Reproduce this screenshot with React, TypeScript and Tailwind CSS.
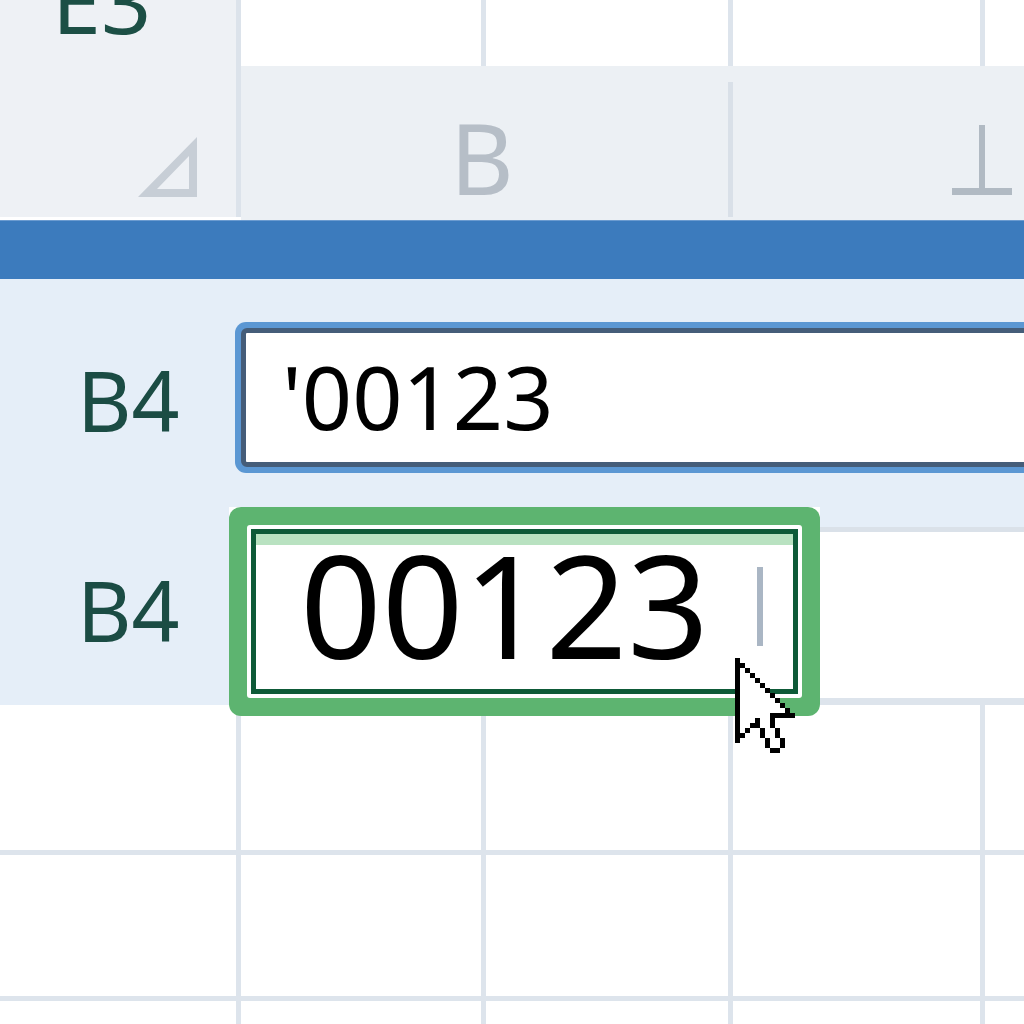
import React from "react";

const CURSOR = [
  "X...........",
  "XX..........",
  "XoX.........",
  "XooX........",
  "XoooX.......",
  "XooooX......",
  "XoooooX.....",
  "XooooooX....",
  "XoooooooX...",
  "XooooooooX..",
  "XoooooooooX.",
  "XooooooXXXXX",
  "XoooXooX....",
  "XooXXooX....",
  "XoX..XooX...",
  "XX...XooX...",
  "X.....XooX..",
  "......XooX..",
  ".......XX...",
];

function MouseCursor() {
  const rects: React.ReactNode[] = [];
  CURSOR.forEach((row, y) => {
    row.split("").forEach((c, x) => {
      if (c === "X" || c === "o") {
        rects.push(
          <rect key={`${x}-${y}`} x={x} y={y} width={1.02} height={1.02} fill={c === "X" ? "#000" : "#fff"} />
        );
      }
    });
  });
  return (
    <svg width={60} height={95} viewBox="0 0 12 19" shapeRendering="crispEdges" className="absolute left-[506px] top-[151px] z-20">
      {rects}
    </svg>
  );
}

export default function App() {
  const font = "font-['Noto_Sans',sans-serif]";
  return (
    <div className={`w-[1024px] h-[1024px] overflow-hidden bg-white ${font}`}>
      {/* top section */}
      <div className="flex h-[220px]">
        <div className="w-[241px] h-[217px] bg-[#eef1f5] border-r-[5px] border-[#dce3eb] flex flex-col shrink-0">
          <div className="mt-[-44px] pl-[52px] text-[88px] leading-none text-[#1c4f45]">E3</div>
          <svg width={60} height={61} viewBox="0 0 60 61" className="mt-[93px] ml-[138px] block">
            <path d="M0 60 L59 0 L59 60 Z M19 52 L51 52 L51 19 Z" fill="#c7ced6" fillRule="evenodd" />
          </svg>
        </div>
        <div className="flex-1 flex flex-col">
          <div className="h-[66px] grid grid-cols-[240px_242px_247px_1fr] gap-x-[5px] bg-[#dde4ec]">
            <div className="bg-white" />
            <div className="bg-white" />
            <div className="bg-white" />
            <div className="bg-white" />
          </div>
          <div className="h-[154px] bg-[#ecf0f4] flex items-start">
            <div className="w-[487px] pl-[209px] pt-[42px] text-[98px] leading-none text-[#b6bec7]">B</div>
            <div className="w-[5px] h-[135px] mt-[16px] bg-[#d9e0e8]" />
            <div className="pl-[219px] pt-[59px] flex flex-col items-center w-[279px]">
              <div className="w-[6px] h-[63px] bg-[#b1bac3]" />
              <div className="w-[60px] h-[7px] bg-[#b1bac3]" />
            </div>
          </div>
        </div>
      </div>

      {/* blue bar */}
      <div className="h-[59px] bg-[#3c7bbd] border-t border-[#6b9bd0]" />

      {/* row A */}
      <div className="h-[228px] bg-[#e5eef8] flex">
        <div className="w-[235px] shrink-0 pt-[79px] pl-[77px] text-[84px] leading-none text-[#1b4c44]">B4</div>
        <div className="mt-[43px] h-[151px] w-[820px] shrink-0 bg-[#5b97d3] p-[6px] rounded-[11px]">
          <div className="h-full bg-white border-[5px] border-[#455d79] rounded-[6px] pl-[36px] pt-[19px] text-[88px] leading-none text-black">
            '00123
          </div>
        </div>
      </div>

      {/* row B */}
      <div className="h-[198px] flex">
        <div className="w-[229px] shrink-0 bg-[#e5eef8] pt-[61px] pl-[77px] text-[84px] leading-none text-[#1b4c44]">B4</div>
        <div className="relative z-10 w-[591px] h-[209px] shrink-0 bg-[#5db470] rounded-[12px] p-[18px]">
          <div className="h-full bg-white p-[4px] rounded-[3px]">
            <div className="h-full border-[5px] border-[#0e5a38] bg-white flex flex-col">
              <div className="h-[11px] bg-[#b9e2c1] shrink-0" />
              <div className="flex items-start mt-[-13px]">
                <div className="w-[501px] pl-[44px] text-[143px] leading-none text-black">00123</div>
                <div className="w-[6px] h-[79px] mt-[35px] bg-[#aab6c4]" />
              </div>
            </div>
          </div>
          <MouseCursor />
        </div>
        <div className="flex-1 flex flex-col">
          <div className="h-[20px] bg-[#e5eef8]" />
          <div className="h-[5px] bg-[#dae1e9]" />
          <div className="h-[166px] bg-white" />
          <div className="h-[7px] bg-[#dde4ec]" />
        </div>
      </div>

      {/* row C grid */}
      <div className="h-[319px] grid grid-cols-[236px_240px_242px_247px_1fr] grid-rows-[145px_141px_1fr] gap-[5px] bg-[#dde4ec]">
        {Array.from({ length: 15 }).map((_, i) => (
          <div key={i} className="bg-white" />
        ))}
      </div>
    </div>
  );
}
